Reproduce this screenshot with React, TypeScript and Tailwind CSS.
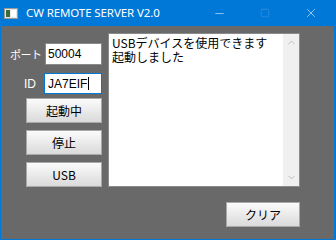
import { Minus, Square, X, ChevronUp, ChevronDown } from "lucide-react";

const jp = "font-['Noto_Sans_CJK_JP','Noto_Sans',sans-serif]";

function WinButton({ label, className }: { label: string; className?: string }) {
  return (
    <button
      className={`h-[25px] border border-[#a9a9a9] bg-gradient-to-b from-[#fbfbfb] to-[#dadada] text-[12px] leading-none text-black ${jp} ${className ?? ""}`}
    >
      {label}
    </button>
  );
}

export default function App() {
  return (
    <div className="w-[336px] h-[240px] flex flex-col bg-[#0078d7] overflow-hidden">
      {/* title bar */}
      <div className="h-[26px] flex items-center text-white shrink-0">
        <svg width="14" height="11" viewBox="0 0 14 11" className="ml-[4px]">
          <rect x="0.5" y="0.5" width="13" height="10" fill="#e8e8e8" stroke="#9a9a9a" />
          <rect x="2" y="2" width="4" height="7" fill="#3c6a3c" />
          <rect x="7" y="2" width="5" height="7" fill="#ffffff" />
        </svg>
        <span className="ml-[8px] text-[11.5px] font-['Noto_Sans',sans-serif] tracking-[-0.1px]">
          CW REMOTE SERVER V2.0
        </span>
        <div className="ml-auto flex items-center">
          <div className="w-[46px] h-[26px] flex items-center justify-center">
            <Minus size={13} strokeWidth={1} />
          </div>
          <div className="w-[46px] h-[26px] flex items-center justify-center text-[#5ea0e0]">
            <Square size={10} strokeWidth={1} />
          </div>
          <div className="w-[46px] h-[26px] flex items-center justify-center mr-[2px]">
            <X size={14} strokeWidth={1} />
          </div>
        </div>
      </div>

      {/* body */}
      <div className="flex-1 ml-[1px] mr-[2px] mb-[1px] bg-[#696969] flex flex-col">
        <div className="flex mt-[7px]">
          <div className="w-[107px] flex flex-col pt-[10px]">
            <div className="flex items-center h-[22px]">
              <span className={`ml-[9px] w-[35px] whitespace-nowrap text-[11px] tracking-[-0.5px] text-white ${jp}`}>ポート</span>
              <div className="w-[57px] h-[22px] bg-white border border-[#8a8a8a] flex items-center pl-[2px] text-[12px] text-black font-['Liberation_Sans',sans-serif]">
                50004
              </div>
            </div>
            <div className="flex items-center h-[21px] mt-[8px]">
              <span className="ml-[23px] w-[20px] text-[12px] text-white font-['Liberation_Sans',sans-serif]">ID</span>
              <div className="w-[58px] h-[21px] bg-white border border-[#0078d7] flex items-center pl-[3px] text-[12px] text-black font-['Liberation_Sans',sans-serif]">
                JA7EIF
                <span className="inline-block w-px h-[13px] bg-black ml-[1px]" />
              </div>
            </div>
            <div className="flex flex-col gap-[7px] mt-[4px] ml-[25px]">
              <WinButton label="起動中" className="w-[76px]" />
              <WinButton label="停止" className="w-[76px]" />
              <WinButton label="USB" className="w-[76px]" />
            </div>
          </div>

          <div className="w-[192px] h-[154px] bg-white border border-[#8a8a8a] flex">
            <div className={`flex-1 pl-[3px] pt-[2px] text-[12px] leading-[14px] text-black ${jp}`}>
              <div>USBデバイスを使用できます</div>
              <div>起動しました</div>
            </div>
            <div className="w-[16px] bg-[#f0f0f0] flex flex-col items-center justify-between py-[3px] text-[#a3a3a3]">
              <ChevronUp size={11} strokeWidth={1.5} />
              <ChevronDown size={11} strokeWidth={1.5} />
            </div>
          </div>
        </div>

        <div className="flex mt-[15px] ml-[225px]">
          <WinButton label="クリア" className="w-[74px]" />
        </div>
      </div>
    </div>
  );
}
